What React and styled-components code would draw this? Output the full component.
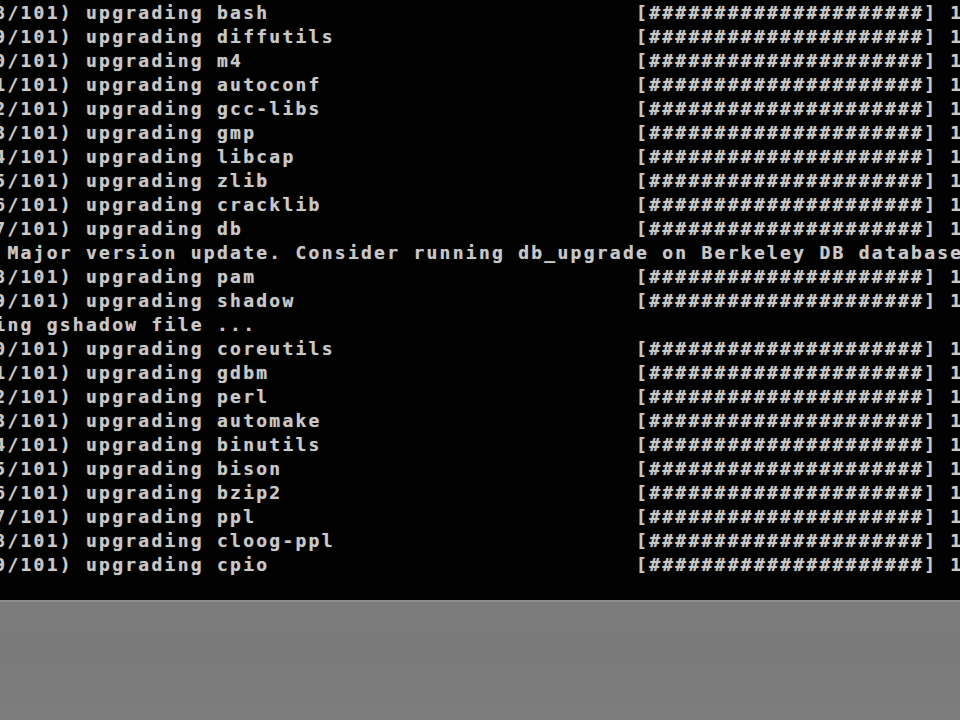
import React from "react";
import styled, { createGlobalStyle } from "styled-components";

const GlobalStyle = createGlobalStyle`
  html, body {
    margin: 0;
    padding: 0;
    background: #000;
  }
  body {
    width: 960px;
    height: 720px;
    overflow: hidden;
  }
`;

const COLS = 52;
const BAR = "[" + "#".repeat(21) + "] 100%";

const lines = [
  { n: 38, pkg: "bash" },
  { n: 39, pkg: "diffutils" },
  { n: 40, pkg: "m4" },
  { n: 41, pkg: "autoconf" },
  { n: 42, pkg: "gcc-libs" },
  { n: 43, pkg: "gmp" },
  { n: 44, pkg: "libcap" },
  { n: 45, pkg: "zlib" },
  { n: 46, pkg: "cracklib" },
  { n: 47, pkg: "db" },
  { text: ">>> Major version update. Consider running db_upgrade on Berkeley DB databases." },
  { n: 48, pkg: "pam" },
  { n: 49, pkg: "shadow" },
  { text: "Adding gshadow file ..." },
  { n: 50, pkg: "coreutils" },
  { n: 51, pkg: "gdbm" },
  { n: 52, pkg: "perl" },
  { n: 53, pkg: "automake" },
  { n: 54, pkg: "binutils" },
  { n: 55, pkg: "bison" },
  { n: 56, pkg: "bzip2" },
  { n: 57, pkg: "ppl" },
  { n: 58, pkg: "cloog-ppl" },
  { n: 59, pkg: "cpio" },
];

const formatLine = (l) => {
  if (l.text) return l.text;
  const head = `( ${l.n}/101) upgrading ${l.pkg}`;
  return head.padEnd(COLS, " ") + BAR;
};

export default function App() {
  return (
    <>
      <GlobalStyle />
      <Monitor>
        <Screen>
          <Console>
            {lines.map((l, i) => (
              <Line key={i}>{formatLine(l)}</Line>
            ))}
          </Console>
        </Screen>
        <Desk />
      </Monitor>
    </>
  );
}

const Monitor = styled.div`
  display: flex;
  flex-direction: column;
  width: 960px;
  height: 720px;
`;

const Screen = styled.div`
  height: 600px;
  flex: none;
  background: #020202;
  overflow: hidden;
`;

const Console = styled.pre`
  margin: 1px 0 0 -45px;
  font-family: "DejaVu Sans Mono", "Liberation Mono", monospace;
  font-weight: bold;
  font-size: 18px;
  letter-spacing: 2.26px;
  line-height: 24px;
  color: #c8c8c8;
  text-shadow: 0 0 1px rgba(200, 200, 200, 0.6);
  white-space: pre;
`;

const Line = styled.div`
  height: 24px;
`;

const Desk = styled.div`
  flex: 1;
  background: linear-gradient(#7c7c7c, #7a7a7a 40%, #7d7d7d);
  border-top: 2px solid #8e8e8e;
`;
